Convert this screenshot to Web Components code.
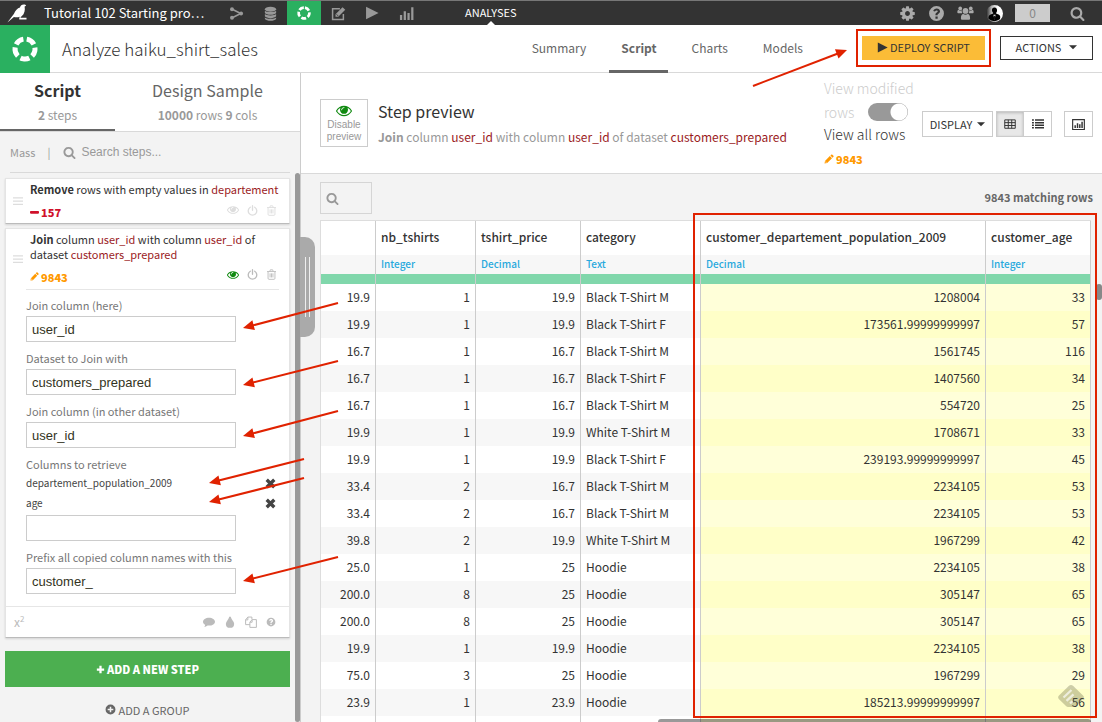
<!DOCTYPE html>
<html lang="en">
<head>
<meta charset="utf-8">
<title>Analyze haiku_shirt_sales</title>
<style>
  html, body { margin: 0; height: 100%; }
  body {
    font: 12px/16px "Noto Sans CJK SC", "Noto Sans", sans-serif;
    color: #333;
    --line: #d9d9d9;
    --panel: #f3f3f3;
    --green: #2ab060;
    --ref: #9b1b1e;
    --orange: #f90;
    --note: #e02200;
  }
</style>
</head>
<body>
<dss-app></dss-app>

<script>
const BASE = `
  *, *::before, *::after { box-sizing: border-box; }
  button, input { font: inherit; color: inherit; margin: 0; padding: 0; border: 0; background: none; border-radius: 0; }
  a { color: inherit; text-decoration: none; }
  b { font-weight: 700; }
  h1, h2, p { margin: 0; font-size: inherit; font-weight: inherit; }
  .ref { color: var(--ref); }
`;

class Base extends HTMLElement {
  connectedCallback() {
    if (this.shadowRoot) return;
    this.attachShadow({ mode: 'open' }).innerHTML = `<style>${BASE}${this.css()}</style>${this.html()}`;
  }
}

/* ---------- icons ---------- */
const FA = 'viewBox="0 0 1792 1792"';
const S = 'viewBox="0 0 16 16"';
const ICONS = {
  search: [FA, '<path d="M1216 832q0-185-131.5-316.5t-316.5-131.5-316.5 131.5-131.5 316.5 131.5 316.5 316.5 131.5 316.5-131.5 131.5-316.5zm512 832q0 52-38 90t-90 38q-54 0-90-38l-343-342q-179 124-399 124-143 0-273.5-55.5t-225-150-150-225-55.5-273.5 55.5-273.5 150-225 225-150 273.5-55.5 273.5 55.5 225 150 150 225 55.5 273.5q0 220-124 399l343 343q37 37 37 90z"/>'],
  eye: ['viewBox="0 64 1792 1792"', '<path d="M1664 960q-152-236-381-353 61 104 61 225 0 185-131.5 316.5t-316.5 131.5-316.5-131.5-131.5-316.5q0-121 61-225-229 117-381 353 133 205 333.5 326.5t434.5 121.5 434.5-121.5 333.5-326.5zm-720-384q0-20-14-34t-34-14q-125 0-214.5 89.5t-89.5 214.5q0 20 14 34t34 14 34-14 14-34q0-86 61-147t147-61q20 0 34-14t14-34zm848 384q0 34-20 69-140 230-376.5 368.5t-499.5 138.5-499.5-139-376.5-368q-20-35-20-69t20-69q140-229 376.5-368t499.5-139 499.5 139 376.5 368q20 35 20 69z"/>'],
  gear: [FA, '<path d="M1152 896q0-106-75-181t-181-75-181 75-75 181 75 181 181 75 181-75 75-181zm512-109v222q0 12-8 23t-20 13l-185 28q-19 54-39 91 35 50 107 138 10 12 10 25t-9 23q-27 37-99 108t-94 71q-12 0-26-9l-138-108q-44 23-91 38-16 136-29 186-7 28-36 28h-222q-14 0-24.5-8.5t-11.5-21.5l-28-184q-49-16-90-37l-141 107q-10 9-25 9-14 0-25-11-126-114-165-168-7-10-7-23 0-12 8-23 15-21 51-66.5t54-70.5q-27-50-41-99l-183-27q-13-2-21-12.5t-8-23.5v-222q0-12 8-23t19-13l186-28q14-46 39-92-40-57-107-138-10-12-10-24 0-10 9-23 26-36 98.5-107.5t94.5-71.5q13 0 26 10l138 107q44-23 91-38 16-136 29-186 7-28 36-28h222q14 0 24.5 8.5t11.5 21.5l28 184q49 16 90 37l142-107q9-9 24-9 13 0 25 10 129 119 165 170 7 8 7 22 0 12-8 23-15 21-51 66.5t-54 70.5q26 50 41 98l183 28q13 2 21 12.5t8 23.5z"/>'],
  help: [S, '<path fill-rule="evenodd" d="M8 1a7 7 0 1 0 0 14A7 7 0 0 0 8 1zM7 10.9h2.1v2H7zM4.9 5.6C5.4 4 6.600 3.200 8.200 3.200c1.700 0 3.100 1.100 3.100 2.700 0 1.200-.7 1.900-1.500 2.400-.6.400-.8.600-.8 1v.4H7v-.6c0-1.200.7-1.800 1.500-2.300.5-.3.7-.5.7-.9 0-.5-.5-.8-1.100-.8-.7 0-1.100.300-1.600 1z"/>'],
  users: ['viewBox="0 0 20 16"', '<circle cx="10" cy="5.600" r="3.400"/><path d="M4.600 14.400c0-3.400.9-5 2.900-5.200 1.600 1.100 3.400 1.100 5 0 2 .2 2.900 1.800 2.900 5.200 0 .9-.7 1.600-1.700 1.600H6.300c-1 0-1.700-.7-1.700-1.600z"/><circle cx="3.800" cy="2.600" r="2.200"/><circle cx="16.200" cy="2.600" r="2.200"/><path d="M5.700 8.300H2C.8 8.300.3 7.800.4 6.700c.1-1.500.6-2.300 1.500-2.200 1 .9 2.600 1 3.700.4-.2 1.300 0 2.300.7 3.100zM14.300 8.300H18c1.200 0 1.700-.5 1.600-1.600-.1-1.500-.6-2.300-1.500-2.200-1 .9-2.600 1-3.700.4.200 1.300 0 2.300-.7 3.100z"/>'],
  avatar: [S, '<defs><linearGradient id="g" x1="0" x2="1"><stop offset="0" stop-color="#222"/><stop offset=".35" stop-color="#bbb"/><stop offset=".7" stop-color="#fff"/></linearGradient></defs><circle cx="8" cy="8" r="8" fill="url(#g)"/><path d="M8 2.400c1.700 0 2.600 1.300 2.400 2.900-.1 1.100-.7 1.900-1.200 2.300.3 1 3.700.9 4.100 3 .2 1 0 2.200-.3 2.900A8 8 0 0 1 2.500 13c-.3-1-.1-2.100.300-2.700C3.600 8.800 6.600 8.800 6.800 7.600 6.200 7.100 5.700 6.300 5.600 5.200 5.500 3.600 6.400 2.400 8 2.400z" fill="#000"/><path d="M7 9.200h2L8 14z" fill="#fff"/><path d="M7.600 10h.9l.2 3-.7 1-.6-1z" fill="#111"/>'],
  bird: ['viewBox="0 0 20 19"', '<path d="M.4 18.600 7 9.800C8.300 6.300 10.400 4.400 13 3.500 13.400 1.500 15 .4 16.900.5c1.200 0 1.900.5 2.200 1.200l-1.500.7c.7 3.500-.1 7.500-2.700 9.600-.8.700-1.300 1-1.300 1.800h5.900V15.400h-7.200c-.2-1.100.1-1.900.5-2.700-1.800.6-4 .7-5.900.2z"/>'],
  flow: [S, '<path d="M3.500 3.500 12.500 8l-9 4.500" fill="none" stroke="currentColor" stroke-width="1.700"/><circle cx="3.200" cy="3.400" r="2.100"/><circle cx="3.200" cy="12.600" r="2.100"/><circle cx="12.900" cy="8" r="2.100"/>'],
  database: [S, '<ellipse cx="8" cy="3.400" rx="6" ry="2.600"/><path d="M2 5c1 2 11 2 12 0v2.400c-1.500 2.600-10.500 2.600-12 0zM2 8.600c1 2 11 2 12 0V11c-1.500 2.600-10.500 2.600-12 0zM2 12.200c1 2 11 2 12 0v1.300c-1.500 3-10.500 3-12 0z"/>'],
  ring: ['viewBox="0 0 26 26"', '<g fill="none" stroke="currentColor" stroke-width="5"><circle cx="13" cy="13" r="10" pathLength="100" stroke-dasharray="14.600 5.400" transform="rotate(-80 13 13)"/></g>'],
  edit: [S, '<path d="M9.500 2.800H1.700v11.500h11.500V8.500" fill="none" stroke="currentColor" stroke-width="1.600"/><path d="M4.800 11.500V8.700l7.500-7.500 2.900 2.800-7.500 7.500z"/><path d="m6 8.900 1.500 1.600" stroke="#333" stroke-width="1"/>'],
  play: [S, '<path d="M1.200.8 15.500 8 1.200 15.200z"/>'],
  bars: [S, '<path d="M1 9.500h2.400V15H1zM5 5.500h2.400V15H5zM9 7.500h2.400V15H9zM13 1.200h2.400V15H13z"/>'],
  grip: [S, '<path d="M0 2h16v2H0zM0 7.200h16v2H0zM0 12.400h16v2H0z"/>'],
  power: [S, '<path d="M4.800 3.200a6.200 6.200 0 1 0 6.400 0M8 1v6.600" fill="none" stroke="currentColor" stroke-width="1.900" stroke-linecap="round"/>'],
  trash: [S, '<path d="M1.500 3.700h13M5.500 3.500l.8-2.300h3.400l.8 2.300M3 4v9.500c0 1 .5 1.500 1.200 1.500h7.600c.7 0 1.200-.5 1.200-1.500V4M5.900 6.300v6M8 6.300v6M10.100 6.300v6" fill="none" stroke="currentColor" stroke-width="1.300"/>'],
  pencil: [S, '<path fill-rule="evenodd" d="M.8 15.200 1.600 11 9.300 3.300l3.500 3.500L5.100 14.500zM10.200 2.400 11.600 1c.5-.5 1.200-.5 1.700 0l1.800 1.800c.5.5.5 1.200 0 1.700l-1.400 1.400zM2.700 11.500l-.3 1.600.6.600 1.600-.3z"/>'],
  minus: [S, '<rect x="0" y="5.500" width="16" height="4.500" rx="1.400"/>'],
  close: [S, '<path d="m2.500 2.500 11 11m0-11-11 11" stroke="currentColor" stroke-width="4.800"/>'],
  comment: [S, '<path d="M8 2.200c4.400 0 8 2.300 8 5.300s-3.600 5.300-8 5.300c-.7 0-1.300 0-1.900-.1-1.300 1.200-2.900 1.800-4.500 1.900.8-.9 1.200-1.800 1.300-2.900C1.100 10.700 0 9.200 0 7.500c0-3 3.600-5.300 8-5.300z"/>'],
  drop: [S, '<path d="M8 .5c.6 0 .9.3 1.100.8.8 2.700 1.800 3.600 3.100 5.700 1 1.500 1.300 2.500 1.300 3.500A5.400 5.400 0 0 1 8 15.800a5.400 5.400 0 0 1-5.500-5.300c0-1 .4-2.100 1.300-3.500C5.100 4.900 6.100 4 6.900 1.300 7.100.8 7.400.5 8 .5z"/>'],
  copy: [S, '<path d="M6.500 11.500H.8V5l3-3.600h5.400v3M.8 5.200h3V1.400M6.500 8.200l3-3.400h5.700v10.400H6.500zM6.500 8.300h3V4.800" fill="none" stroke="currentColor" stroke-width="1.300"/>'],
  plus: [S, '<path d="M6 1.500h4V6h4.500v4H10v4.500H6V10H1.500V6H6z"/>'],
  addcircle: [S, '<path fill-rule="evenodd" d="M8 .8a7.200 7.200 0 1 0 0 14.400A7.200 7.200 0 0 0 8 .8zM6.900 3.900h2.200v3h3v2.200h-3v3H6.900v-3h-3V6.900h3z"/>'],
  caret: [S, '<path d="M0 4.500h16L8 12.500z"/>'],
  grid: [S, '<path d="M1 2.500h14v11.200H1zM1 6.200h14M1 10h14M5.700 2.500v11.200M10.300 2.500v11.200" fill="none" stroke="currentColor" stroke-width="1.300"/>'],
  list: [S, '<path d="M0 1.800h2.500v2H0zM0 5.200h2.500v2H0zM0 8.600h2.500v2H0zM0 12h2.500v2H0zM4 1.800h12v2H4zM4 5.200h12v2H4zM4 8.600h12v2H4zM4 12h12v2H4z"/>'],
  chart: [S, '<path d="M.8 2h14.400v12.200H.8z" fill="none" stroke="currentColor" stroke-width="1.400"/><path d="M3 9h1.800v3.200H3zM5.900 6.500h1.800v5.700H5.900zM8.700 7.800h1.800v4.400H8.700zM11.500 4.500h1.800v7.700h-1.800z"/>'],
  feedly: ['viewBox="0 0 26 22"', '<path d="M11 .8c1.200-1.100 2.800-1.100 4 0l10 9.800c1.100 1.100 1.100 2.400.2 3.400L18 21c-.6.600-1.300.9-2.200.9h-5.600c-.9 0-1.600-.3-2.200-.9L.8 14c-.9-1-.9-2.300.2-3.400z" fill="#666644" opacity=".33"/><path d="m5.500 12.500 8-7.500M8.500 15.800l7-6.500M12 18.500l2.500-2.300" stroke="#fff" stroke-width="2.300" opacity=".65"/>']
};
class DssIcon extends Base {
  css() { return `:host { display: inline-block; flex: none; width: var(--s, 16px); height: var(--h, var(--s, 16px)); } svg { display: block; width: 100%; height: 100%; fill: currentColor; overflow: visible; }`; }
  html() { const [vb, body] = ICONS[this.getAttribute('name')]; return `<svg ${vb} aria-hidden="true">${body}</svg>`; }
}
const icon = (n, s, extra = '') => `<dss-icon name="${n}" style="--s:${s}px;${extra}"></dss-icon>`;

/* ---------- dark project bar ---------- */
class TopBar extends Base {
  css() { return `
    :host { display: flex; align-items: stretch; height: 25px; background: #333; border-top: 1px solid #777; color: #999; }
    .home { display: flex; align-items: center; padding-left: 7px; color: #fff; }
    .project { width: 192px; padding-left: 17px; font-size: 13px; line-height: 23px; color: #fff; white-space: nowrap; }
    nav { display: flex; }
    nav a { display: flex; width: 34px; align-items: center; justify-content: center; }
    nav a.on { background: var(--green); color: #fff; }
    .section { position: relative; margin-left: 42px; font-size: 11px; line-height: 23px; color: #fff; }
    .section::after { content: ""; position: absolute; bottom: 0; left: calc(50% - 4px); border: 4px solid transparent; border-top: 0; border-bottom-color: #fff; }
    .tools { margin-left: auto; display: flex; align-items: center; gap: 12px; padding-right: 17px; }
    .tools button { display: flex; color: #aaa; }
    .tools .count { width: 35px; height: 18px; background: #ccc; color: #888; font-size: 12px; line-height: 17px; justify-content: center; }
    .tools button:last-child { margin-left: 8px; }
  `; }
  html() { return `
    <a class="home" href="#" aria-label="Home">${icon('bird', 20, '--h:19px')}</a>
    <a class="project" href="#">Tutorial 102 Starting pro…</a>
    <nav>
      <a href="#" aria-label="Flow">${icon('flow', 15)}</a>
      <a href="#" aria-label="Datasets">${icon('database', 15)}</a>
      <a href="#" aria-label="Analyses" class="on">${icon('ring', 14)}</a>
      <a href="#" aria-label="Notebooks">${icon('edit', 15)}</a>
      <a href="#" aria-label="Jobs">${icon('play', 14)}</a>
      <a href="#" aria-label="Insights">${icon('bars', 15)}</a>
    </nav>
    <a class="section" href="#">ANALYSES</a>
    <div class="tools">
      <button aria-label="Settings">${icon('gear', 17)}</button>
      <button aria-label="Help">${icon('help', 17)}</button>
      <button aria-label="Users">${icon('users', 17, '--h:14px')}</button>
      <button aria-label="Profile">${icon('avatar', 17)}</button>
      <button class="count">0</button>
      <button aria-label="Search">${icon('search', 15)}</button>
    </div>`; }
}

/* ---------- title and tabs ---------- */
class TitleBar extends Base {
  css() { return `
    :host { display: flex; height: 48px; border-bottom: 1px solid var(--line); background: #fff; }
    .logo { display: flex; width: 50px; height: 48px; background: var(--green); color: #fff; align-items: center; justify-content: center; }
    h1 { margin-left: 12px; font-size: 17px; font-weight: 300; line-height: 48px; }
    nav { display: flex; gap: 11px; margin-left: auto; margin-right: 41px; }
    nav a { height: 48px; padding: 0 12px; line-height: 46px; color: #666; }
    nav a.on { font-weight: 700; border-bottom: 3px solid #666; }
    .actions { display: flex; align-items: center; gap: 9px; height: 46px; padding-right: 9px; }
    .mark { display: flex; border: 2px solid var(--note); padding: 5px 4px; }
    button { display: flex; align-items: center; justify-content: center; gap: 2px; height: 24px; font-size: 11px; line-height: 22px; padding-bottom: 2px; white-space: nowrap; }
    .deploy { width: 123px; background: #fbbc37; }
    .menu { width: 93px; gap: 8px; border: 1px solid #333; }
  `; }
  html() { return `
    <div class="logo">${icon('ring', 26)}</div>
    <h1>Analyze haiku_shirt_sales</h1>
    <nav><a href="#">Summary</a><a href="#" class="on">Script</a><a href="#">Charts</a><a href="#">Models</a></nav>
    <div class="actions">
      <div class="mark"><button class="deploy">${icon('play', 11)}DEPLOY SCRIPT</button></div>
      <button class="menu">ACTIONS ${icon('caret', 8)}</button>
    </div>`; }
}

/* ---------- script steps ---------- */
class TextField extends Base {
  css() { return `
    :host { display: block; padding-bottom: 9px; }
    label { display: block; height: 18px; font-size: 11px; line-height: 14px; color: #777; white-space: nowrap; }
    input { display: block; width: 210px; height: 26px; padding: 0 5px; border: 1px solid #ccc; background: #fff; font: 13px "Liberation Sans", sans-serif; color: #332; }
  `; }
  html() { return `<label for="f">${this.getAttribute('label')}</label><slot></slot><input id="f" type="text" value="${this.getAttribute('value') || ''}">`; }
}

class StepCard extends Base {
  css() { return `
    :host { display: block; margin-bottom: 4px; background: #fff; border: 1px solid #e4e4e4; border-bottom: 1px solid #bbb; box-shadow: 0 1px 2px #0002; }
    .head { display: grid; grid-template-columns: 24px 1fr; padding-right: 10px; }
    .grip { align-self: center; padding-left: 7px; color: #ddd; display: flex; }
    .text { padding-top: 3px; font-size: 11px; line-height: 15px; }
    .stat { display: flex; align-items: center; font-size: 11px; font-weight: 900; gap: 2px; }
    .stat.removed { color: #d0112b; height: 26px; padding-top: 4px; }
    .stat.changed { color: var(--orange); height: 27px; padding-top: 2px; }
    .tools { margin-left: auto; display: flex; gap: 8px; color: #bbb; align-items: center; padding: 0 2px 4px 0; }
    .tools button { display: flex; }
    .tools .live { color: #108a10; }
    :host([off]) .tools { color: #ddd; }
  `; }
  html() {
    const off = this.hasAttribute('off');
    return `
    <div class="head">
      <div class="grip">${icon('grip', 10)}</div>
      <div>
        <div class="text"><slot name="text"></slot></div>
        <div class="stat ${off ? 'removed' : 'changed'}">${icon(off ? 'minus' : 'pencil', 9)}<span>${this.getAttribute('count')}</span>
          <span class="tools"><button class="${off ? '' : 'live'}" aria-label="Preview">${icon('eye', 12)}</button><button aria-label="Disable">${icon('power', 11)}</button><button aria-label="Delete">${icon('trash', 11)}</button></span>
        </div>
      </div>
    </div>
    <slot></slot>`;
  }
}

class SidePanel extends Base {
  css() { return `
    :host { display: flex; flex-direction: column; position: relative; background: var(--panel); border-right: 1px solid #ccc; min-height: 0; }
    .tabs { display: flex; height: 59px; background: #fff; border-bottom: 1px solid var(--line); text-align: center; flex: none; }
    .tabs a { padding-top: 6px; color: #666; flex: 185 1 0; }
    .tabs a.on { flex: 115 1 0; height: 58px; border-bottom: 2px solid #666; color: #333; }
    .tabs span { display: block; font-size: 16px; line-height: 22px; }
    .tabs .on span { font-weight: 700; }
    .tabs small { display: block; margin-top: 5px; font-size: 12px; line-height: 18px; color: #999; }
    .filter { display: flex; align-items: center; flex: none; height: 41px; margin: 0 10px; border-bottom: 1px solid var(--line); color: #999; font-size: 11px; }
    .filter i { font-style: normal; margin: 0 13px 0 12px; }
    .filter input { margin-left: 5px; width: 160px; font: 12px "Liberation Sans", sans-serif; }
    .filter input::placeholder { color: #999; opacity: 1; }
    .body { position: relative; flex: 1; min-height: 0; overflow: hidden; padding: 5px 10px 0 5px; }
    .form { margin: 0 10px 0 20px; padding-top: 8px; border-top: 1px solid #e6e6e6; }
    .cols { list-style: none; margin: -2px 0 0; padding: 0 0 2px; }
    .cols li { display: flex; justify-content: space-between; align-items: center; height: 20px; padding-right: 3px; font-size: 10px; color: #444; }
    .cols button { display: flex; color: #444; }
    .foot { display: flex; align-items: center; gap: 9px; height: 31px; margin-top: 3px; padding: 0 13px 0 8px; border-top: 1px solid #e6e6e6; color: #bbb; font-size: 12px; }
    .foot sup { font-size: 8px; line-height: 8px; }
    .foot button { display: flex; }
    .foot button:first-child { display: block; margin-right: auto; }
    .add { display: flex; align-items: center; justify-content: center; gap: 2px; width: 100%; height: 36px; margin-top: 13px; background: #4caf50; color: #fff; font-size: 11px; font-weight: 900; }
    .group { display: flex; align-items: center; justify-content: center; gap: 2px; width: 100%; height: 45px; color: #666; font-size: 11px; }
    .thumb { position: absolute; right: 0; top: 100px; bottom: 0; width: 5px; background: #999; border-radius: 3px; }
    .handle { position: absolute; z-index: 1; left: 300px; top: 164px; width: 15px; height: 100px; background: #aaa; border-radius: 0 10px 10px 0; }
    .handle::before { content: ""; position: absolute; left: 5px; top: 20px; width: 5px; height: 60px; border: solid #eee; border-width: 0 1px; }
  `; }
  html() { return `
    <div class="tabs">
      <a href="#" class="on"><span>Script</span><small><b>2</b> steps</small></a>
      <a href="#"><span>Design Sample</span><small><b>10000</b> rows <b>9</b> cols</small></a>
    </div>
    <div class="filter"><span>Mass</span><i>|</i>${icon('search', 13)}<input type="text" aria-label="Search steps" placeholder="Search steps..."></div>
    <div class="body">
      <step-card off count="157"><span slot="text"><b>Remove</b> rows with empty values in <span class="ref">departement</span></span></step-card>
      <step-card count="9843">
        <span slot="text"><b>Join</b> column <span class="ref">user_id</span> with column <span class="ref">user_id</span> of<br>dataset <span class="ref">customers_prepared</span></span>
        <div class="form">
          <text-field label="Join column (here)" value="user_id"></text-field>
          <text-field label="Dataset to Join with" value="customers_prepared"></text-field>
          <text-field label="Join column (in other dataset)" value="user_id"></text-field>
          <text-field label="Columns to retrieve">
            <ul class="cols">
              <li>departement_population_2009<button aria-label="Remove departement_population_2009">${icon('close', 11)}</button></li>
              <li>age<button aria-label="Remove age">${icon('close', 11)}</button></li>
            </ul>
          </text-field>
          <text-field label="Prefix all copied column names with this" value="customer_"></text-field>
        </div>
        <div class="foot"><button aria-label="Formula">x<sup>2</sup></button><button aria-label="Comment">${icon('comment', 12)}</button><button aria-label="Color">${icon('drop', 12)}</button><button aria-label="Duplicate">${icon('copy', 12)}</button><button aria-label="Help">${icon('help', 10)}</button></div>
      </step-card>
      <button class="add">${icon('plus', 9)}ADD A NEW STEP</button>
      <button class="group">${icon('addcircle', 11)}ADD A GROUP</button>
    </div>
    <div class="thumb"></div><div class="handle"></div>`; }
}

/* ---------- preview header ---------- */
class PreviewHeader extends Base {
  css() { return `
    :host { display: flex; align-items: flex-start; height: 101px; padding: 0 9px 0 19px; background: #fff; border-bottom: 1px solid var(--line); }
    button { display: flex; align-items: center; justify-content: center; border: 1px solid #ccc; background: #fff; }
    .toggle { flex-direction: column; width: 48px; height: 48px; margin-top: 26px; color: #999; font: 10px/12px "Liberation Sans", sans-serif; }
    .toggle dss-icon { color: #108a10; }
    .title { margin: 27px 0 0 10px; white-space: nowrap; }
    h2 { font-size: 16px; line-height: 22px; }
    .title p { margin-top: 6px; line-height: 18px; color: #999; }
    .view { margin-left: auto; width: 98px; padding-top: 3px; font-size: 14px; line-height: 24px; font-weight: 300; color: #ccc; white-space: nowrap; }
    .view label { display: flex; align-items: center; gap: 14px; }
    .view p { color: #333; line-height: 20px; }
    .view .n { display: flex; align-items: center; gap: 2px; margin-top: 6px; font-size: 11px; line-height: 18px; font-weight: 900; color: var(--orange); }
    input { appearance: none; width: 40px; height: 18px; border-radius: 9px; background: radial-gradient(circle 9px at 31px 9px, #fff 8px, transparent 9px), #999; }
    .group { display: flex; margin: 38px 0 0 3px; }
    .group button { width: 28px; height: 26px; }
    .group button + button { border-left: 0; }
    .group .on { background: #e8e8e8; box-shadow: inset 0 1px 3px #0003; }
    .display { width: 71px; height: 26px; margin-top: 38px; gap: 5px; font-size: 11px; }
    .chart { width: 29px; height: 26px; margin: 38px 0 0 12px; }
  `; }
  html() { return `
    <button class="toggle">${icon('eye', 18, '--h:16px')}<span>Disable<br>preview</span></button>
    <div class="title"><h2>Step preview</h2><p><b>Join</b> column <span class="ref">user_id</span> with column <span class="ref">user_id</span> of dataset <span class="ref">customers_prepared</span></p></div>
    <div class="view"><span>View modified</span><label>rows <input type="checkbox" role="switch" checked></label><p>View all rows</p><div class="n">${icon('pencil', 10)}9843</div></div>
    <button class="display">DISPLAY ${icon('caret', 8)}</button>
    <div class="group"><button class="on" aria-label="Table">${icon('grid', 12)}</button><button aria-label="List">${icon('list', 12)}</button></div>
    <button class="chart" aria-label="Quick chart">${icon('chart', 13)}</button>`; }
}

/* ---------- data table ---------- */
const COLS = [['', ''], ['nb_tshirts', 'Integer'], ['tshirt_price', 'Decimal'], ['category', 'Text'], ['customer_departement_population_2009', 'Decimal'], ['customer_age', 'Integer']];
const ROWS = [
  ['19.9', 1, '19.9', 'Black T-Shirt M', '1208004', 33], ['19.9', 1, '19.9', 'Black T-Shirt F', '173561.99999999997', 57],
  ['16.7', 1, '16.7', 'Black T-Shirt M', '1561745', 116], ['16.7', 1, '16.7', 'Black T-Shirt F', '1407560', 34],
  ['16.7', 1, '16.7', 'Black T-Shirt M', '554720', 25], ['19.9', 1, '19.9', 'White T-Shirt M', '1708671', 33],
  ['19.9', 1, '19.9', 'Black T-Shirt F', '239193.99999999997', 45], ['33.4', 2, '16.7', 'Black T-Shirt M', '2234105', 53],
  ['33.4', 2, '16.7', 'Black T-Shirt M', '2234105', 53], ['39.8', 2, '19.9', 'White T-Shirt M', '1967299', 42],
  ['25.0', 1, '25', 'Hoodie', '2234105', 38], ['200.0', 8, '25', 'Hoodie', '305147', 65],
  ['200.0', 8, '25', 'Hoodie', '305147', 65], ['19.9', 1, '19.9', 'Hoodie', '2234105', 38],
  ['75.0', 3, '25', 'Hoodie', '1967299', 29], ['23.9', 1, '23.9', 'Hoodie', '185213.99999999997', 56],
  ['', '', '', '', '', '']
];
class DataTable extends Base {
  css() { return `
    :host { display: block; border-top: 1px solid #ddd; border-left: 1px solid #ddd; }
    table { width: 100%; border-spacing: 0; table-layout: fixed; background: #fff; }
    th, td { padding: 0 5px 2px; border-right: 1px solid #ccc; text-align: left; white-space: nowrap; overflow: hidden; }
    th { height: 34px; font-weight: 500; }
    .types td { height: 19px; background: #f7f7f7; color: #28a9dd; font-size: 10px; font-weight: 500; line-height: 17px; }
    .valid td { height: 10px; background: #80d7ab; line-height: 8px; }
    .data td { height: 27px; padding-bottom: 2px; text-align: right; }
    .data td:nth-child(4) { text-align: left; }
    .data tr:nth-child(even) td { background: #f7f7f7; }
    .data td:nth-child(n+5) { background: #ffffd9; }
    .data tr:nth-child(even) td:nth-child(n+5) { background: #ffffc8; }
  `; }
  html() {
    const cells = (a, t) => a.map(v => `<${t}>${v}</${t}>`).join('');
    return `<table>
      <colgroup><col style="width:55px"><col style="width:100px"><col style="width:105px"><col style="width:120px"><col><col style="width:105px"></colgroup>
      <thead><tr>${cells(COLS.map(c => c[0]), 'th')}</tr>
      <tr class="types">${cells(COLS.map(c => c[1]), 'td')}</tr>
      <tr class="valid">${cells(COLS.map(() => ''), 'td')}</tr></thead>
      <tbody class="data">${ROWS.map(r => `<tr>${cells(r, 'td')}</tr>`).join('')}</tbody></table>`;
  }
}

class DataPanel extends Base {
  css() { return `
    :host { display: block; position: relative; background: var(--panel); overflow: hidden; min-height: 0; padding: 8px 11px 0 19px; }
    .bar { display: flex; align-items: center; justify-content: space-between; height: 38px; padding-bottom: 6px; }
    label { display: flex; align-items: center; width: 52px; height: 32px; padding-left: 5px; border: 1px solid #d5d5d5; color: #999; }
    input { width: 30px; }
    .bar b { margin-right: -2px; padding-bottom: 3px; font-size: 11px; font-weight: 700; color: #666; }
    .v { position: absolute; right: 0; top: 110px; width: 6px; height: 16px; border-radius: 3px; background: #888; }
    .h { position: absolute; right: 11px; bottom: -3px; width: 433px; height: 6px; border-radius: 3px; background: #0006; }
    .mark { position: absolute; right: 5px; top: 39px; width: 404px; height: 505px; border: 2px solid var(--note); }
    .feedly { position: absolute; right: 18px; bottom: 15px; display: flex; }
  `; }
  html() { return `
    <div class="bar"><label>${icon('search', 13)}<input type="text" aria-label="Search columns"></label><b>9843 matching rows</b></div>
    <data-table></data-table>
    <div class="v"></div><div class="h"></div><div class="mark"></div>
    <div class="feedly">${icon('feedly', 26, '--h:22px')}</div>`; }
}

/* ---------- arrow callouts over the interface ---------- */
class ArrowLayer extends Base {
  css() { return `
    :host { position: absolute; pointer-events: none; z-index: 5; }
    svg { display: block; overflow: visible; }
    path { fill: var(--note); } line { stroke: var(--note); stroke-width: 2; }
  `; }
  html() {
    const w = this.getAttribute('w'), h = this.getAttribute('h');
    const arrows = this.getAttribute('arrows').split(';').map(a => {
      const [x1, y1, x2, y2] = a.split(',').map(Number);
      const ang = Math.atan2(y2 - y1, x2 - x1);
      const bx = x2 - 9 * Math.cos(ang), by = y2 - 9 * Math.sin(ang);
      return `<line x1="${x1}" y1="${y1}" x2="${bx}" y2="${by}"/><path transform="translate(${x2} ${y2}) rotate(${ang * 180 / Math.PI})" d="M0 0-11-5v10z"/>`;
    }).join('');
    return `<svg width="${w}" height="${h}" aria-hidden="true">${arrows}</svg>`;
  }
}

class DssApp extends Base {
  css() { return `
    :host { display: grid; position: relative; grid-template: 25px 48px minmax(0, 1fr) / 301px minmax(0, 1fr); height: 100vh; overflow: hidden; background: #fff; }
    top-bar, title-bar { grid-column: 1 / -1; }
    main { display: grid; grid-template-rows: 101px minmax(0, 1fr); min-height: 0; }
    .steps { left: 0; top: 0; }
    .deploy { right: 253px; top: 47px; }
  `; }
  html() { return `
    <top-bar></top-bar><title-bar></title-bar><side-panel></side-panel>
    <main><preview-header></preview-header><data-panel></data-panel></main>
    <arrow-layer class="steps" w="345" h="600" arrows="338,303,243,328;338,361,243,385;338,411,243,436;304,459,209,483;304,478,209,502;338,557,243,581"></arrow-layer>
    <arrow-layer class="deploy" w="100" h="42" arrows="4,39,98,3"></arrow-layer>`; }
}

[['dss-icon', DssIcon], ['top-bar', TopBar], ['title-bar', TitleBar], ['text-field', TextField], ['step-card', StepCard], ['side-panel', SidePanel],
 ['preview-header', PreviewHeader], ['data-table', DataTable], ['data-panel', DataPanel], ['arrow-layer', ArrowLayer], ['dss-app', DssApp]]
  .forEach(([n, c]) => customElements.define(n, c));
</script>
</body>
</html>
